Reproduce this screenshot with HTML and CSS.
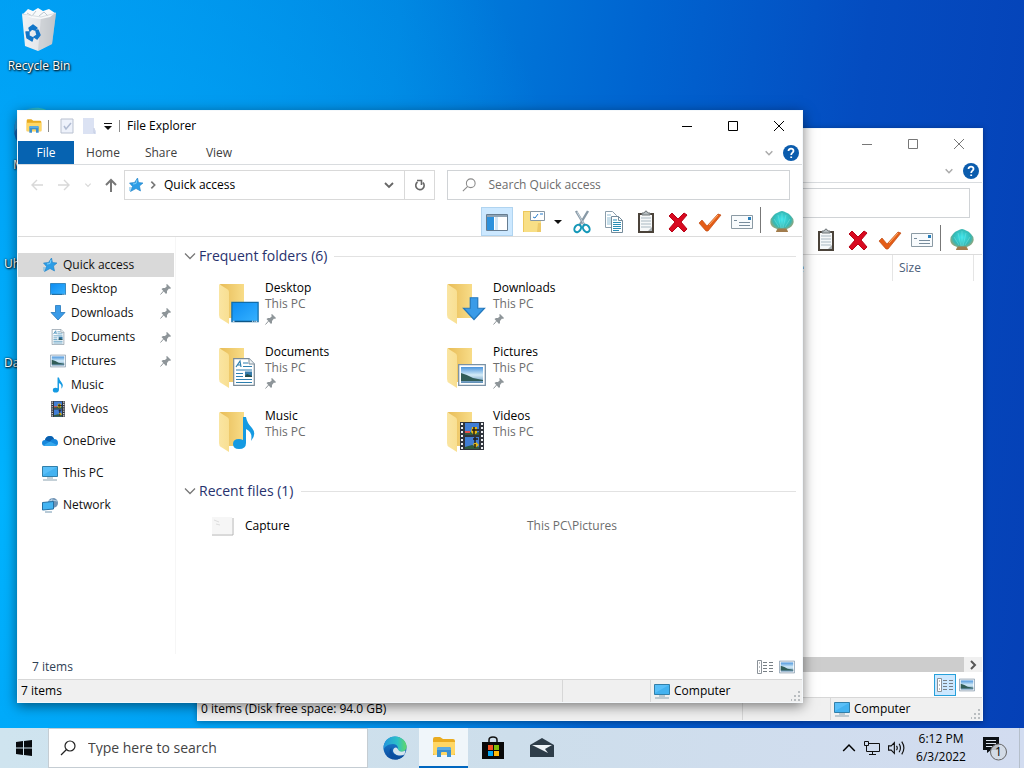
FILE: index.html
```html
<!DOCTYPE html>
<html lang="en">
<head>
<meta charset="utf-8">
<title>Desktop</title>
<link rel="stylesheet" href="styles.css">
</head>
<body>
<svg class="sprite" aria-hidden="true">
  <defs>
    <linearGradient id="g-sky" x1="0" y1="0" x2="1" y2="1"><stop offset="0" stop-color="#0c8cf2"/><stop offset="1" stop-color="#36b2ff"/></linearGradient>
    <linearGradient id="g-back" x1="0" y1="0" x2="1" y2="0"><stop offset="0" stop-color="#e8bd58"/><stop offset="1" stop-color="#f8dc88"/></linearGradient>
    <linearGradient id="g-front" x1="0" y1="0" x2="1" y2="0"><stop offset="0" stop-color="#fae5a2"/><stop offset="1" stop-color="#f8df92"/></linearGradient>
    <radialGradient id="g-shell" cx=".5" cy=".4" r=".62"><stop offset="0" stop-color="#3ae6ee"/><stop offset=".6" stop-color="#35b8b4"/><stop offset="1" stop-color="#d09a58"/></radialGradient>
    <linearGradient id="g-edge1" x1="0" y1="0" x2="1" y2="0"><stop offset="0" stop-color="#2496dc"/><stop offset=".6" stop-color="#2cc0c8"/><stop offset="1" stop-color="#62d866"/></linearGradient>
    <linearGradient id="g-edge2" x1="0" y1="0" x2="0" y2="1"><stop offset="0" stop-color="#1b86d8"/><stop offset="1" stop-color="#0c4a9c"/></linearGradient>
    <linearGradient id="g-photo" x1="0" y1="0" x2="0" y2="1"><stop offset="0" stop-color="#4a94dc"/><stop offset=".5" stop-color="#d4ecf8"/><stop offset="1" stop-color="#5c8cb4"/></linearGradient>
    <linearGradient id="g-bin" x1="0" y1="0" x2="1" y2="0"><stop offset="0" stop-color="#f0f2f4"/><stop offset=".6" stop-color="#e2e4e8"/><stop offset="1" stop-color="#b4b8be"/></linearGradient>
  </defs>
  <symbol id="i-bin" viewBox="0 0 40 46">
    <path d="M3 6 22 9 37 5 33 36 19 43 6 38Z" fill="url(#g-bin)"/>
    <path d="M22 9 37 5 33 36 19 43Z" fill="#c6cace" opacity=".7"/>
    <path d="M4 6 9 1 14 3 19 0 24 3 30 1 36 5 31 9 22 11 13 10Z" fill="#f8fafb"/>
    <path d="M8 5 13 8 17 3M20 8 25 4 29 8" stroke="#bcc7d0" fill="none"/>
    <path d="M3 6 22 9 37 5" fill="none" stroke="#d8dde2"/>
    <path d="M10 20 14 17 18 20 16 22 13 21 11 23ZM19 22 21 27 18 31 15 29 18 27 17 23ZM7 24 10 24 10 28 14 30 13 33 8 30Z" fill="#1275c8" stroke="#1275c8" stroke-width="1.4" stroke-linejoin="round"/>
  </symbol>
  <symbol id="i-edge" viewBox="0 0 24 24">
    <circle cx="12" cy="12" r="11.5" fill="url(#g-edge2)"/>
    <path d="M.7 10C2 3 7 .4 12 .4 19 .4 23.6 5.500 23.600 10.500 23.600 14 21 16 18 16 15.500 16 14 15 14.500 14 15.500 12.500 15 8 10 8 5 8 1 11 .7 14Z" fill="url(#g-edge1)"/>
    <path d="M8.500 11.500C7.500 17 11.500 21 17 20.500 19 20.300 21 19.500 22 18.500 19.500 22 16 23.500 12 23.500 6 22 5 14.500 8.500 11.500Z" fill="#0c4f9f"/>
    <path d="M14.500 12.500C16 16 19 16.500 22.500 14.500L21.500 18.500C17 21 11 19 10 15 10 12 13 10.500 14.500 12.500Z" fill="#d4e4ee"/>
  </symbol>
  <symbol id="i-explorer" viewBox="0 0 24 22">
    <path d="M1 3Q1 1 3 1H8L11 3H21Q23 3 23 5V19H1Z" fill="#e9ab20"/>
    <path d="M1 6H23V17Q23 19 21 19H3Q1 19 1 17Z" fill="#ffd765"/>
    <path d="M5 21V13Q5 11 7 11H17Q19 11 19 13V21H15V17Q15 16 14 16H10Q9 16 9 17V21Z" fill="#3a8fd0"/>
    <path d="M5 14V13Q5 11 7 11H17Q19 11 19 13V14Z" fill="#5aabe2"/>
  </symbol>
  <symbol id="i-doccheck" viewBox="0 0 14 16"><path d="M1 1H13V15H1Z" fill="#eef2fb" stroke="#b9c1d0"/><path d="M4 8 6 11 11 5" fill="none" stroke="#b0bbd2" stroke-width="1.500"/></symbol>
  <symbol id="i-docblank" viewBox="0 0 14 16"><path d="M1 0H12V10L14 13V16H1Z" fill="#dbe2f3"/><path d="M12 10V15H13" stroke="#c5cde2" fill="none"/></symbol>
  <symbol id="i-drop" viewBox="0 0 8 8"><path d="M0 2H8L4 6Z" fill="#111"/></symbol>
  <symbol id="i-qdrop" viewBox="0 0 8 8"><path d="M0 1.500H8" stroke="#111"/><path d="M0 4H8L4 8Z" fill="#111"/></symbol>
  <symbol id="i-min" viewBox="0 0 10 10"><path d="M0 5.500H10" stroke="currentColor"/></symbol>
  <symbol id="i-max" viewBox="0 0 10 10"><path d="M.5.5H9.500V9.500H.5Z" stroke="currentColor" fill="none"/></symbol>
  <symbol id="i-close" viewBox="0 0 10 10"><path d="M0 0 10 10M10 0 0 10" stroke="currentColor" fill="none"/></symbol>
  <symbol id="i-chev" viewBox="0 0 12 12"><path d="M1 3.500 6 8.500 11 3.500" stroke="currentColor" fill="none" stroke-width="1.300"/></symbol>
  <symbol id="i-chevb" viewBox="0 0 12 12"><path d="M2 4 6 8 10 4" stroke="currentColor" fill="none" stroke-width="1.800"/></symbol>
  <symbol id="i-chevr" viewBox="0 0 12 12"><path d="M4 2 8 6 4 10" stroke="currentColor" fill="none" stroke-width="2"/></symbol>
  <symbol id="i-help" viewBox="0 0 16 16"><circle cx="8" cy="8" r="8" fill="#0b5cad"/><path d="M5.500 6C5.500 2.800 10.700 3 10.500 6 10.400 7.700 8.200 7.700 8.200 10M8.200 11.500V13" fill="none" stroke="#fff" stroke-width="1.800"/></symbol>
  <symbol id="i-arrow" viewBox="0 0 16 16"><path d="M14 8H3M8 3 3 8 8 13" stroke="currentColor" fill="none" stroke-width="1.400"/></symbol>
  <symbol id="i-up" viewBox="0 0 16 16"><path d="M8 15V3M3 8 8 3 13 8" stroke="currentColor" fill="none" stroke-width="2"/></symbol>
  <symbol id="i-star" viewBox="0 0 16 16"><path d="M9.500 1 10.500 5.500 15 6 11.500 9 12.500 14 8 11.500 2.500 14.500 4.500 9.500 1.500 6 6.500 5.500Z" fill="#2c9de6" stroke="#1c80c6" stroke-width=".6"/><path d="M5 7 8 6.500 9 3" stroke="#7fd0fb" fill="none"/><path d="M1 11H4M1 13H3" stroke="#67b7e8"/></symbol>
  <symbol id="i-refresh" viewBox="0 0 12 12"><path d="M3.500 3A4.200 4.200 0 1 0 9 3.500M3 1.500H7.500V6" stroke="#666" fill="none" stroke-width="1.600"/></symbol>
  <symbol id="i-search" viewBox="0 0 16 16"><circle cx="10" cy="6" r="5" stroke="currentColor" fill="none" stroke-width="1.200"/><path d="M6.500 9.500 1 15" stroke="currentColor" stroke-width="1.200"/></symbol>
  <symbol id="i-panel" viewBox="0 0 24 24"><path d="M1.500 4.500H22.500V20.500H1.500Z" fill="#fff" stroke="#667c90"/><path d="M2 5H22V7H2Z" fill="#90a4b5"/><path d="M2 7H9V20H2Z" fill="#2d91dc"/><path d="M10 7H13V20H10Z" fill="#d4e6f5"/><path d="M14 7V20H22V7Z" fill="#fff"/></symbol>
  <symbol id="i-newfolder" viewBox="0 0 24 24"><path d="M1 1H9V22H1Z" fill="#edc85c"/><path d="M2 2H19V22H2Z" fill="#f8df86"/><path d="M8.500 1.500H22.500V10.500H8.500Z" fill="#fff" stroke="#8797a4"/><path d="M11 7 13 8 16 4M18 4H21" stroke="#247acb" fill="none"/><path d="M16 13H19V22H15Z" fill="#edca68"/></symbol>
  <symbol id="i-cut" viewBox="0 0 24 24"><path d="M6 1 15 16M18 1 9 16" stroke="#8899a6" stroke-width="2.400"/><path d="M7 2 15 16" stroke="#c4d1da"/><ellipse cx="8" cy="18.500" rx="3" ry="4" transform="rotate(35 8 18)" fill="none" stroke="#1598b8" stroke-width="2"/><ellipse cx="16" cy="18.500" rx="3" ry="4" transform="rotate(-35 16 18)" fill="none" stroke="#1598b8" stroke-width="2"/></symbol>
  <symbol id="i-copy" viewBox="0 0 24 24"><path d="M3.500 1.500H10.500L14.500 5.500V17.500H3.500Z" fill="#fff" stroke="#8b9eac"/><path d="M5 5H9M5 8H11M5 10H10M5 12H10M5 14H10" stroke="#92bfd5"/><path d="M9.500 6.500H16.500L20.500 10.500V22.500H9.500Z" fill="#fff" stroke="#748b9b"/><path d="M16.500 6.500V10.500H20.500" stroke="#748b9b" fill="none"/><path d="M11 10H15M11 12.500H19M11 14.500H19M11 16.500H19M11 18.500H19M11 20.500H17" stroke="#2a8db5"/></symbol>
  <symbol id="i-paste" viewBox="0 0 24 24"><path d="M4 3H20V23H4Z" fill="#4b433a"/><path d="M6 5H18V21H6Z" fill="#f6f8f9"/><path d="M7 8H17M7 11H17M7 14H17M7 17H17" stroke="#a9b8c1"/><path d="M14 21 18 17V21Z" fill="#aab1b5"/><path d="M8 5V3H10Q12-1 14 3H16V5Z" fill="#b6bdc0" stroke="#6e7477"/></symbol>
  <symbol id="i-delete" viewBox="0 0 24 24"><path d="M3 6 6 3 12 9 18 3 21 5 15 12 21 19 18 22 12 16 6 22 3 19 9 12Z" fill="#d90920" stroke="#b70518"/></symbol>
  <symbol id="i-check" viewBox="0 0 24 24"><path d="M1 13 4 10 9 16 20 4 23 5 10 21H8Z" fill="#e45c16" stroke="#bd4b12" stroke-width=".7"/><path d="M11 15 20 5" stroke="#ffae68"/></symbol>
  <symbol id="i-props" viewBox="0 0 24 24"><path d="M1.500 5.500H22.500V18.500H1.500Z" fill="#f8fbfd" stroke="#8b9aa4"/><path d="M18 7H21V10H18Z" fill="#257dba"/><path d="M4 10.500H7M9 12.500H20M9 15.500H20" stroke="#788c9c"/></symbol>
  <symbol id="i-shell" viewBox="0 0 24 24"><path d="M6 22 7 19Q0 17 .3 12 .5 8 3 6 5 3 8 2.500 10 1 12 1 14 1 16 2.500 19 3 21 6 23.500 8 23.700 12 23 17 17 19L18 22Z" fill="url(#g-shell)"/><path d="M12 3V18M8 5 11 18M16 5 13 18M4 9 9 17M20 9 15 17" stroke="#79e6e2" stroke-width=".8" opacity=".6"/><path d="M6 22 8 18.500H16L18 22Z" fill="#a17c4e"/></symbol>
  <symbol id="i-desktop" viewBox="0 0 16 16"><path d="M.5 2.500H15.500V13.500H.5Z" fill="url(#g-sky)" stroke="#116ca8" stroke-width=".7"/><path d="M1 13.300H15" stroke="#0d527f" stroke-width=".6"/><path d="M1 13.300H2M12 13.300H12.500M13 13.300H13.500M14 13.300H15" stroke="#fff" stroke-width=".6"/></symbol>
  <symbol id="i-down" viewBox="0 0 16 16"><path d="M5.500.5H10.500V7.500H15L8 15 1 7.500H5.500Z" fill="#3a9be8" stroke="#2478bd" stroke-width=".8"/></symbol>
  <symbol id="i-doc" viewBox="0 0 22 28"><path d="M.7.7H16L21.300 6V27.300H.7Z" fill="#fff" stroke="#7a8b98" stroke-width="1.200"/><path d="M16 .7V6H21.300" fill="#edf2f4" stroke="#7a8b98"/><path d="M3 9 7 3 8 9M4.500 7H8M10 5H15M10 8.500H19M3 12H19M3 15.500H10M3 18.500H10M3 21.500H19M3 24.500H19" stroke="#2d7faf" stroke-width="1.200" fill="none"/><path d="M12 13.500H19V19H12Z" fill="#367baa"/><path d="M12 18 14 16 19 18V19H12Z" fill="#254c49"/></symbol>
  <symbol id="i-pic" viewBox="0 0 28 22"><path d="M.7.700H27.300V21.300H.7Z" fill="#fff" stroke="#7991a5" stroke-width="1.300"/><path d="M3 3H25V19H3Z" fill="url(#g-photo)"/><path d="M3 9Q10 11 15 14L25 16V17H3Z" fill="#315d58"/></symbol>
  <symbol id="i-note" viewBox="0 0 24 34"><path d="M11 1H14Q15 7 20 12 25 18 19 25 21 16 14 13V27Q14 33 7 33 1 33 1 28 1 23 7 23 9 23 11 24Z" fill="#159ae2"/></symbol>
  <symbol id="i-film" viewBox="0 0 24 28"><path d="M0 0H24V28H0Z" fill="#30343c"/><path d="M2 1V28M22 1V28" stroke="#edf0f3" stroke-width="2" stroke-dasharray="2 2"/><path d="M5 1H19V13H5ZM5 15H19V27H5Z" fill="#417ed5"/><path d="M5 11 10 10 15 11 19 10V13H5ZM5 25 12 23 19 25V27H5Z" fill="#315c3e"/><path d="M12 5H17V11L14 13 11 10ZM13 22 16 20 19 23 15 26Z" fill="#e4b912"/><path d="M14 5V13M12 8H19M15 15V21M13 17H18M15 22V26" stroke="#241c16" stroke-width="1.500"/><path d="M5 10H10" stroke="#e44f4d" stroke-width="2"/></symbol>
  <symbol id="i-cloud" viewBox="0 0 16 16"><path d="M3 13Q0 13 0 10 0 7 3 7 4 3 8 3 11 3 12 6 16 6 16 10 16 13 13 13Z" fill="#1687dc"/><path d="M3 7Q4 3 8 3 11 3 12 6 9 6 8 9Z" fill="#0b60ae"/><path d="M2 12 8 8.500 15 12 13 13H3Z" fill="#35a8ed"/></symbol>
  <symbol id="i-pc" viewBox="0 0 16 16"><path d="M.5 1.500H15.500V11.500H.5Z" fill="#43b2f0" stroke="#327fa9"/><path d="M1 2H15L1 10Z" fill="#6bcaff" opacity=".55"/><path d="M5 13H11M1 15H15" stroke="#89a2af"/></symbol>
  <symbol id="i-net" viewBox="0 0 16 16"><circle cx="11" cy="6" r="5" fill="#7093b4"/><path d="M7 4Q10 2 15 4M10 1Q8 6 10 11" stroke="#b4cfe4" fill="none"/><path d="M.5 5.500 11.500 4.500V12L.5 13Z" fill="#43b4f2" stroke="#246fa3"/><path d="M3 15H10" stroke="#7396af"/></symbol>
  <symbol id="i-pin" viewBox="0 0 12 12"><path d="M7 1 11 5 10 6 9 5.500 7 8V10L6 11 1.500 6 3 5H5L7 3 6 2Z" fill="#8e9599"/><path d="M4 7.500.5 11.500" stroke="#8e9599"/></symbol>
  <symbol id="i-folder" viewBox="0 0 42 42"><path d="M2 1H26V35H10Z" fill="url(#g-back)"/><path d="M1 1 9 6Q11 7 11 9V41L3 36Q1 35 1 32Z" fill="url(#g-front)"/></symbol>
  <symbol id="i-details" viewBox="0 0 16 14"><path d="M.5.5H4.500V13.500H.5Z" fill="#fff" stroke="#8b9299"/><path d="M2 3H3M2 7H3M2 11H3M6 2.500H10M12 2.500H16M6 5.500H10M12 5.500H16M6 8.500H10M12 8.500H16M6 11.500H10M12 11.500H16" stroke="#777f85"/></symbol>
  <symbol id="i-grip" viewBox="0 0 10 10"><path d="M7 0H9V2H7ZM7 4H9V6H7ZM7 8H9V10H7ZM3 4H5V6H3ZM3 8H5V10H3ZM0 8H1V10H0Z" fill="#b9bdc0"/></symbol>
  <symbol id="i-capture" viewBox="0 0 24 20"><path d="M1 1H21V18H1Z" fill="#f6f6f6"/><path d="M22 2V19H1" stroke="#b4b4b4" fill="none"/><path d="M3 4 8 6M5 8 9 9" stroke="#ddd"/></symbol>
  <symbol id="i-win" viewBox="0 0 16 16"><path d="M0 2 7 1V7.500H0ZM8 .9 16 0V7.500H8ZM0 8.500H7V15L0 14ZM8 8.500H16V16L8 15Z" fill="#080b0e"/></symbol>
  <symbol id="i-store" viewBox="0 0 24 24"><path d="M8 6V4Q8 1 12 1 16 1 16 4V6" stroke="#111" fill="none" stroke-width="1.500"/><path d="M1 6H23V23H1Z" fill="#080808"/><path d="M7 9H12V14H7Z" fill="#f35325"/><path d="M13 9H18V14H13Z" fill="#81bc06"/><path d="M7 15H12V20H7Z" fill="#05a6f0"/><path d="M13 15H18V20H13Z" fill="#ffba08"/></symbol>
  <symbol id="i-mail" viewBox="0 0 24 20"><path d="M0 7 12 0 24 7V19H0Z" fill="#2e3d49"/><path d="M2 7H22L15 11 18 15 10 11Z" fill="#eef4f8"/></symbol>
  <symbol id="i-tnet" viewBox="0 0 16 14"><path d="M5 2.500H15.500V10.500H2.500V5M8.500 11V13.500M5 13.500H12M.5.500H4.500V4.500H.5ZM2.500 5V10" stroke="#111" fill="none"/></symbol>
  <symbol id="i-sound" viewBox="0 0 17 14"><path d="M.5 5H3L6 2V12L3 9H.5ZM8 5Q9.500 7 8 9M10.500 3Q13 7 10.500 11M13 1Q17 7 13 13" stroke="#111" fill="none" stroke-width="1.100"/></symbol>
  <symbol id="i-notify" viewBox="0 0 26 26"><path d="M1 2H17V15H9L5 18V15H1Z" fill="#0c1014"/><path d="M4 5.500H14M4 8.500H14M4 11.500H10" stroke="#d9e2ed"/><circle cx="16.500" cy="17" r="8" fill="#d4dae4" fill-opacity=".85" stroke="#666"/></symbol>
</svg>

<main class="desktop">
  <ul class="shortcuts">
    <li class="shortcut"><svg class="shortcut-icon"><use href="#i-bin"/></svg><span>Recycle Bin</span></li>
    <li class="shortcut shortcut-edge"><svg class="shortcut-icon"><use href="#i-edge"/></svg><span>M</span></li>
    <li class="shortcut shortcut-long"><span>Uh</span></li>
    <li class="shortcut shortcut-long"><span>Da</span></li>
  </ul>

  <section class="window window-back" aria-label="Computer">
    <header class="titlebar">
      <div class="captions">
        <button class="caption" aria-label="Minimize"><svg class="s10"><use href="#i-min"/></svg></button>
        <button class="caption" aria-label="Maximize"><svg class="s10"><use href="#i-max"/></svg></button>
        <button class="caption" aria-label="Close"><svg class="s10"><use href="#i-close"/></svg></button>
      </div>
    </header>
    <div class="ribbon"><div class="ribbon-end"><button class="plain" aria-label="Expand ribbon"><svg class="s10"><use href="#i-chevb"/></svg></button><button class="plain" aria-label="Help"><svg class="s16"><use href="#i-help"/></svg></button></div></div>
    <div class="address-row"><div class="address"></div><input class="search-empty" type="text" aria-label="Search"></div>
    <div class="toolbar">
      <button class="tool" aria-label="Paste"><svg class="s24"><use href="#i-paste"/></svg></button>
      <button class="tool" aria-label="Delete"><svg class="s24"><use href="#i-delete"/></svg></button>
      <button class="tool" aria-label="Rename"><svg class="s24"><use href="#i-check"/></svg></button>
      <button class="tool" aria-label="Properties"><svg class="s24"><use href="#i-props"/></svg></button>
      <span class="tool-line"></span>
      <button class="tool" aria-label="Classic Shell"><svg class="s24"><use href="#i-shell"/></svg></button>
    </div>
    <div class="list-pane">
      <div class="columns"><span class="column">Type</span><span class="column column-size">Size</span></div>
      <div class="list-space"></div>
      <div class="scrollbar"><span class="thumb"></span><button class="plain scroll-arrow" aria-label="Scroll right"><svg class="s12"><use href="#i-chevr"/></svg></button></div>
    </div>
    <div class="info-row"><div class="view-modes"><button class="mode mode-on" aria-label="Details"><svg class="mode-icon"><use href="#i-details"/></svg></button><button class="mode" aria-label="Large icons"><svg class="mode-icon"><use href="#i-pic"/></svg></button></div></div>
    <footer class="statusbar"><span>0 items (Disk free space: 94.0 GB)</span><span></span><span class="zone"><svg class="s16"><use href="#i-pc"/></svg>Computer<svg class="grip"><use href="#i-grip"/></svg></span></footer>
  </section>

  <section class="window window-front" aria-label="File Explorer">
    <header class="titlebar">
      <div class="quickbar">
        <svg class="s16"><use href="#i-explorer"/></svg><span class="qline"></span>
        <button class="plain" aria-label="Properties"><svg class="quick-icon"><use href="#i-doccheck"/></svg></button>
        <button class="plain" aria-label="New folder"><svg class="quick-icon"><use href="#i-docblank"/></svg></button>
        <button class="plain" aria-label="Customize toolbar"><svg class="s8"><use href="#i-qdrop"/></svg></button><span class="qline"></span>
      </div>
      <h1 class="title">File Explorer</h1>
      <div class="captions">
        <button class="caption" aria-label="Minimize"><svg class="s10"><use href="#i-min"/></svg></button>
        <button class="caption" aria-label="Maximize"><svg class="s10"><use href="#i-max"/></svg></button>
        <button class="caption" aria-label="Close"><svg class="s10"><use href="#i-close"/></svg></button>
      </div>
    </header>
    <div class="ribbon">
      <button class="tab tab-file">File</button><button class="tab">Home</button><button class="tab">Share</button><button class="tab">View</button>
      <div class="ribbon-end"><button class="plain" aria-label="Expand ribbon"><svg class="s10"><use href="#i-chevb"/></svg></button><button class="plain" aria-label="Help"><svg class="s16"><use href="#i-help"/></svg></button></div>
    </div>
    <div class="address-row">
      <div class="history">
        <button class="plain faint" aria-label="Back"><svg class="s16"><use href="#i-arrow"/></svg></button>
        <button class="plain faint" aria-label="Forward"><svg class="s16 flip"><use href="#i-arrow"/></svg></button>
        <button class="plain faint" aria-label="Recent locations"><svg class="s8"><use href="#i-chevb"/></svg></button>
        <button class="plain" aria-label="Up"><svg class="s16"><use href="#i-up"/></svg></button>
      </div>
      <div class="address">
        <svg class="s16"><use href="#i-star"/></svg><svg class="s10 crumb-arrow"><use href="#i-chevr"/></svg><span class="crumb">Quick access</span>
        <button class="plain address-btn" aria-label="Previous locations"><svg class="s12"><use href="#i-chevb"/></svg></button>
        <button class="plain address-btn refresh" aria-label="Refresh"><svg class="s12"><use href="#i-refresh"/></svg></button>
      </div>
      <label class="search"><svg class="s14"><use href="#i-search"/></svg><input type="text" placeholder="Search Quick access" aria-label="Search Quick access"></label>
    </div>
    <div class="toolbar">
      <button class="tool tool-on" aria-label="Navigation pane"><svg class="s24"><use href="#i-panel"/></svg></button>
      <button class="tool" aria-label="Folder options"><svg class="s24"><use href="#i-newfolder"/></svg></button>
      <button class="tool tool-drop" aria-label="More options"><svg class="s8"><use href="#i-drop"/></svg></button>
      <button class="tool" aria-label="Cut"><svg class="s24"><use href="#i-cut"/></svg></button>
      <button class="tool" aria-label="Copy"><svg class="s24"><use href="#i-copy"/></svg></button>
      <button class="tool" aria-label="Paste"><svg class="s24"><use href="#i-paste"/></svg></button>
      <button class="tool" aria-label="Delete"><svg class="s24"><use href="#i-delete"/></svg></button>
      <button class="tool" aria-label="Rename"><svg class="s24"><use href="#i-check"/></svg></button>
      <button class="tool" aria-label="Properties"><svg class="s24"><use href="#i-props"/></svg></button>
      <span class="tool-line"></span>
      <button class="tool" aria-label="Classic Shell"><svg class="s24"><use href="#i-shell"/></svg></button>
    </div>
    <div class="body">
      <nav class="nav">
        <a class="place place-on" href="#quick"><svg class="s16"><use href="#i-star"/></svg>Quick access</a>
        <a class="place sub" href="#desktop"><svg class="s16"><use href="#i-desktop"/></svg>Desktop<svg class="s12 pin"><use href="#i-pin"/></svg></a>
        <a class="place sub" href="#downloads"><svg class="s16"><use href="#i-down"/></svg>Downloads<svg class="s12 pin"><use href="#i-pin"/></svg></a>
        <a class="place sub" href="#documents"><svg class="s16"><use href="#i-doc"/></svg>Documents<svg class="s12 pin"><use href="#i-pin"/></svg></a>
        <a class="place sub" href="#pictures"><svg class="s16"><use href="#i-pic"/></svg>Pictures<svg class="s12 pin"><use href="#i-pin"/></svg></a>
        <a class="place sub" href="#music"><svg class="s16"><use href="#i-note"/></svg>Music</a>
        <a class="place sub" href="#videos"><svg class="s16"><use href="#i-film"/></svg>Videos</a>
        <a class="place root" href="#onedrive"><svg class="s16"><use href="#i-cloud"/></svg>OneDrive</a>
        <a class="place root" href="#pc"><svg class="s16"><use href="#i-pc"/></svg>This PC</a>
        <a class="place root" href="#network"><svg class="s16"><use href="#i-net"/></svg>Network</a>
      </nav>
      <div class="content">
        <h2 class="group"><svg class="s12"><use href="#i-chev"/></svg>Frequent folders (6)</h2>
        <ul class="folders">
          <li class="folder"><span class="thumbnail"><svg class="big"><use href="#i-folder"/></svg><svg class="badge badge-wide"><use href="#i-desktop"/></svg></span><span class="labels"><b>Desktop</b><i>This PC</i><svg class="s12"><use href="#i-pin"/></svg></span></li>
          <li class="folder"><span class="thumbnail"><svg class="big"><use href="#i-folder"/></svg><svg class="badge badge-arrow"><use href="#i-down"/></svg></span><span class="labels"><b>Downloads</b><i>This PC</i><svg class="s12"><use href="#i-pin"/></svg></span></li>
          <li class="folder"><span class="thumbnail"><svg class="big"><use href="#i-folder"/></svg><svg class="badge badge-tall"><use href="#i-doc"/></svg></span><span class="labels"><b>Documents</b><i>This PC</i><svg class="s12"><use href="#i-pin"/></svg></span></li>
          <li class="folder"><span class="thumbnail"><svg class="big"><use href="#i-folder"/></svg><svg class="badge badge-photo"><use href="#i-pic"/></svg></span><span class="labels"><b>Pictures</b><i>This PC</i><svg class="s12"><use href="#i-pin"/></svg></span></li>
          <li class="folder"><span class="thumbnail"><svg class="big"><use href="#i-folder"/></svg><svg class="badge badge-note"><use href="#i-note"/></svg></span><span class="labels"><b>Music</b><i>This PC</i></span></li>
          <li class="folder"><span class="thumbnail"><svg class="big"><use href="#i-folder"/></svg><svg class="badge badge-tall"><use href="#i-film"/></svg></span><span class="labels"><b>Videos</b><i>This PC</i></span></li>
        </ul>
        <h2 class="group"><svg class="s12"><use href="#i-chev"/></svg>Recent files (1)</h2>
        <div class="recent"><span class="recent-name"><svg class="s24"><use href="#i-capture"/></svg>Capture</span><span class="recent-path">This PC\Pictures</span></div>
      </div>
    </div>
    <div class="info-row"><span class="count">7 items</span><div class="view-modes"><button class="mode" aria-label="Details"><svg class="mode-icon"><use href="#i-details"/></svg></button><button class="mode" aria-label="Large icons"><svg class="mode-icon"><use href="#i-pic"/></svg></button></div></div>
    <footer class="statusbar"><span>7 items</span><span></span><span class="zone"><svg class="s16"><use href="#i-pc"/></svg>Computer<svg class="grip"><use href="#i-grip"/></svg></span></footer>
  </section>
</main>

<footer class="taskbar">
  <button class="start" aria-label="Start"><svg class="s16"><use href="#i-win"/></svg></button>
  <label class="task-search"><svg class="s16"><use href="#i-search"/></svg><input type="text" placeholder="Type here to search" aria-label="Type here to search"></label>
  <div class="apps">
    <button class="app" aria-label="Edge"><svg class="s24"><use href="#i-edge"/></svg></button>
    <button class="app app-on" aria-label="File Explorer"><svg class="s24"><use href="#i-explorer"/></svg></button>
    <button class="app" aria-label="Store"><svg class="s24"><use href="#i-store"/></svg></button>
    <button class="app" aria-label="Mail"><svg class="s24"><use href="#i-mail"/></svg></button>
  </div>
  <div class="tray">
    <button class="plain" aria-label="Hidden icons"><svg class="s14 flip-y"><use href="#i-chev"/></svg></button>
    <button class="plain" aria-label="Network"><svg class="s16"><use href="#i-tnet"/></svg></button>
    <button class="plain" aria-label="Volume"><svg class="s18"><use href="#i-sound"/></svg></button>
    <time class="clock"><span>6:12 PM</span><span>6/3/2022</span></time>
    <button class="plain notify" aria-label="Notifications"><svg class="notify-icon"><use href="#i-notify"/></svg><span class="notify-count">1</span></button>
  </div>
</footer>
</body>
</html>
```

FILE: styles.css
```css
* { box-sizing: border-box; }
body {
  margin: 0;
  min-height: 100vh;
  display: flex;
  flex-direction: column;
  font: 12px/16px "Open Sans", "Noto Sans", sans-serif;
  color: #000;
  background:
    radial-gradient(ellipse 60% 110% at 0 65%, #00b4ff 0, rgba(0, 172, 252, .8) 35%, rgba(0, 150, 240, 0) 100%),
    linear-gradient(97deg, #0094ec 0, #0082de 36%, #0064d0 58%, #044cc0 78%, #0540b6 100%);
}
button, input { font: inherit; color: inherit; }
button { border: 0; background: none; padding: 0; }
ul { list-style: none; margin: 0; padding: 0; }
svg { display: block; flex: none; }
.sprite { position: absolute; width: 0; height: 0; }
.s8 { width: 8px; height: 8px; }
.s10 { width: 10px; height: 10px; }
.s12 { width: 12px; height: 12px; }
.s14 { width: 14px; height: 14px; }
.s16 { width: 16px; height: 16px; }
.s18 { width: 18px; height: 18px; }
.s24 { width: 24px; height: 24px; }
.flip { transform: scaleX(-1); }
.flip-y { transform: scaleY(-1); }
.plain { display: flex; align-items: center; justify-content: center; }

.desktop { flex: 1; position: relative; overflow: hidden; }
.shortcuts { width: 78px; padding-top: 8px; }
.shortcut {
  height: 99px;
  display: flex;
  flex-direction: column;
  align-items: center;
  gap: 4px;
  color: #fff;
  text-align: center;
  text-shadow: 1px 1px 2px #000, 0 0 2px #000;
}
.shortcut-icon { width: 46px; height: 46px; }
.shortcut-edge { align-items: flex-start; padding-left: 13px; }
.shortcut-long { align-items: flex-start; padding: 50px 0 0 4px; }

.window {
  position: absolute;
  width: 786px;
  height: 593px;
  display: flex;
  flex-direction: column;
  background: #fff;
  border: 1px solid #f4f8fb;
  box-shadow: 0 3px 12px rgba(0, 0, 0, .5);
}
.window-front { left: 17px; top: 110px; }
.window-back { left: 197px; top: 128px; box-shadow: 0 1px 6px rgba(0, 0, 0, .35); }
.titlebar { height: 30px; display: flex; align-items: center; }
.quickbar { display: flex; align-items: center; gap: 6px; padding-left: 8px; }
.quickbar .plain { padding: 0 1px; }
.quick-icon { width: 14px; height: 16px; }
.qline { width: 1px; height: 12px; background: #8a8a8a; }
.quickbar .qline:first-of-type { margin-right: 4px; }
.title { margin: 0 0 0 7px; font: inherit; }
.captions { display: flex; margin-left: auto; }
.caption { width: 46px; height: 30px; display: flex; align-items: center; justify-content: center; color: #000; }
.window-back .caption { color: #777; }
.ribbon { height: 24px; display: flex; border-bottom: 1px solid #d9dcdf; }
.tab { width: 58px; color: #404040; }
.tab-file { width: 56px; background: #0663b1; color: #fff; }
.ribbon-end { margin-left: auto; padding-right: 3px; display: flex; align-items: center; gap: 9px; color: #aaa; }
.address-row { height: 40px; display: flex; align-items: center; padding-right: 12px; }
.history { width: 106px; display: flex; align-items: center; justify-content: space-between; padding: 0 5px 0 11px; color: #777; }
.faint { color: #d8d8d8; }
.address { flex: 306; height: 30px; display: flex; align-items: center; border: 1px solid #d9d9d9; padding-left: 3px; }
.window-back .address { margin-left: 106px; }
.crumb-arrow { margin: 0 6px 0 4px; color: #777; }
.crumb { flex: 1; }
.address-btn { width: 30px; height: 28px; color: #666; }
.refresh { border-left: 1px solid #d9d9d9; }
.search, .search-empty { flex: 326; min-width: 0; height: 30px; margin-left: 12px; border: 1px solid #d0d3d6; }
.search { display: flex; align-items: center; gap: 12px; padding-left: 14px; color: #8a8a8a; }
.search input, .task-search input { flex: 1; min-width: 0; border: 0; outline: 0; padding: 0; background: none; }
.search input::placeholder { color: #6d6d6d; opacity: 1; }
.toolbar { height: 32px; display: flex; justify-content: flex-end; align-items: stretch; padding: 2px 4px 0 0; border-bottom: 1px solid #dcdcdc; }
.tool { width: 32px; display: flex; align-items: center; justify-content: center; }
.tool-on { margin-right: 5px; background: #cce8ff; border: 1px solid #b0d4f0; }
.tool-drop { width: 16px; }
.tool-line { width: 1px; margin: 0 5px 3px 2px; background: #777; }
.body { flex: 1; min-height: 0; display: flex; }
.nav { width: 158px; padding: 16px 1px 0 0; border-right: 1px solid #f6f6f6; }
.place { height: 24px; display: flex; align-items: center; gap: 5px; padding: 0 2px 0 24px; color: #111; text-decoration: none; }
.place-on { background: #d9d9d9; }
.sub { padding-left: 32px; }
.root { margin-top: 8px; }
.pin { margin-left: auto; }
.content { flex: 1; padding: 7px 6px 0 8px; }
.group { margin: 0; height: 24px; display: flex; align-items: center; gap: 3px; font-size: 14px; line-height: 24px; font-weight: 400; color: #28326e; }
.group .s12 { color: #777; }
.group::after { content: ""; flex: 1; height: 1px; margin-left: 4px; background: #e2e2e2; }
.folders { display: grid; grid-template-columns: repeat(2, 228px); grid-auto-rows: 64px; padding: 12px 0 7px 34px; }
.folder { display: flex; gap: 5px; }
.thumbnail { position: relative; width: 42px; height: 48px; padding-top: 3px; }
.big { width: 42px; height: 42px; }
.badge { position: absolute; right: 2px; bottom: 6px; }
.badge-wide { width: 28px; height: 28px; right: 1px; bottom: 2px; }
.badge-arrow { width: 24px; height: 26px; }
.badge-tall { width: 24px; height: 28px; right: 4px; }
.badge-photo { width: 28px; height: 22px; }
.badge-note { width: 24px; height: 34px; right: 4px; }
.labels { display: flex; flex-direction: column; }
.labels b, .labels i { font-weight: 400; font-style: normal; }
.labels i { color: #6d6d6d; }
.labels svg { margin-top: 1px; }
.recent { display: grid; grid-template-columns: 316px 1fr; align-items: center; padding: 11px 0 0 27px; }
.recent-name { display: flex; align-items: center; gap: 10px; }
.recent-path { color: #6d6d6d; }
.info-row { height: 25px; display: flex; align-items: center; padding: 0 4px 0 14px; color: #2f4156; }
.view-modes { display: flex; margin-left: auto; }
.mode { width: 22px; height: 22px; display: flex; align-items: center; justify-content: center; }
.mode-on { background: #cce8ff; border: 1px solid #26a0da; }
.mode-icon { width: 16px; height: 14px; }
.statusbar { height: 23px; display: grid; grid-template-columns: 1fr 88px 152px; background: #f0f0f0; border-top: 1px solid #d7d7d7; line-height: 22px; }
.statusbar > span { padding-left: 3px; }
.statusbar > span + span { border-left: 1px solid #d7d7d7; }
.zone { display: flex; align-items: center; gap: 4px; }
.grip { width: 10px; height: 10px; margin: auto 1px 1px auto; }
.list-pane { flex: 1; display: flex; flex-direction: column; }
.columns { height: 26px; display: grid; grid-template-columns: 1fr 81px; margin-right: 8px; color: #4c607a; line-height: 26px; }
.column { border-right: 1px solid #e5e5e5; padding-left: 6px; }
.column:first-child { text-align: right; padding-right: 88px; }
.list-space { flex: 1; }
.scrollbar { height: 15px; display: flex; background: #f0f0f0; }
.thumb { flex: 1; background: #cdcdcd; }
.scroll-arrow { width: 18px; color: #555; }

.taskbar { height: 40px; display: flex; position: relative; background: linear-gradient(90deg, #cfe4ef, #cddeeb 50%, #d2dcf0); }
.start { width: 48px; display: flex; align-items: center; justify-content: center; }
.task-search { width: 320px; display: flex; align-items: center; gap: 12px; padding-left: 11px; background: #fff; border: 1px solid #c5cdd3; color: #222; font-size: 14px; }
.task-search input::placeholder { color: #444; opacity: 1; }
.apps { display: flex; padding-left: 2px; }
.app { width: 49px; display: flex; align-items: center; justify-content: center; }
.app-on { background: #f0f6fa; border-bottom: 2px solid #0067c0; }
.tray { display: flex; align-items: center; gap: 8px; margin-left: auto; margin-right: 4px; padding-right: 11px; border-right: 1px solid #b5bfcb; }
.clock { width: 54px; display: flex; flex-direction: column; align-items: center; line-height: 18px; }
.notify { position: relative; margin-left: 6px; }
.notify-icon { width: 26px; height: 26px; }
.notify-count { position: absolute; left: 13px; top: 9px; }
```
